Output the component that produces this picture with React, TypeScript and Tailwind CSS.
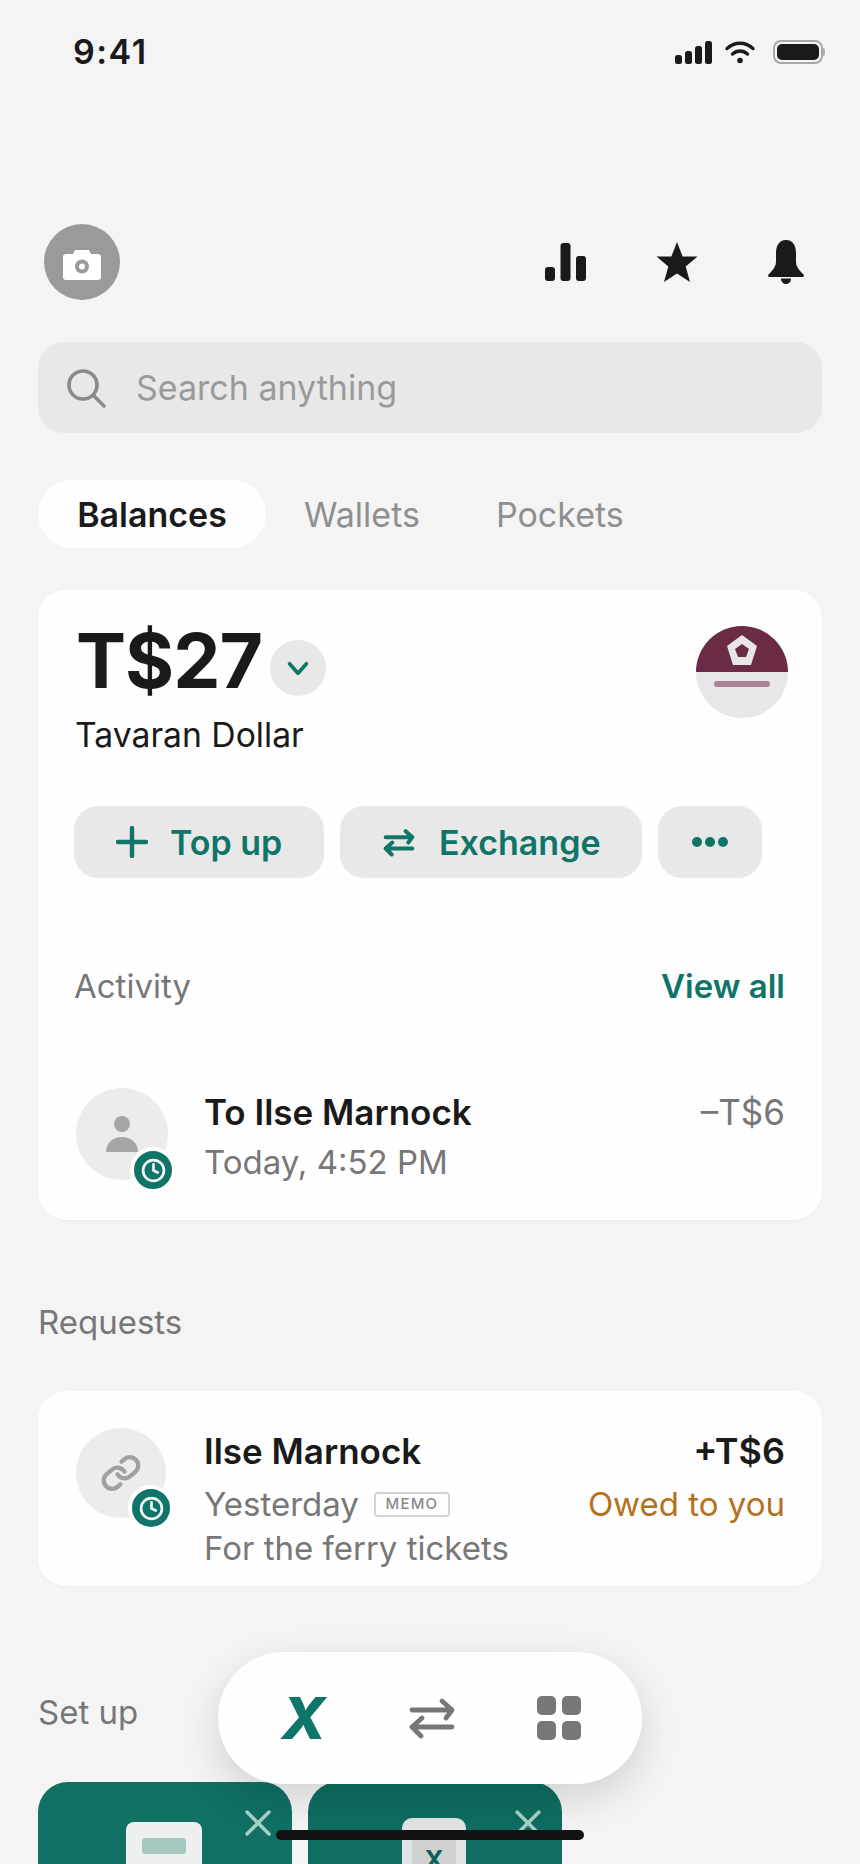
import { Clock, Link, X } from "lucide-react"

const TEAL = "#0f7568"

function ExchangeArrows({ className, strokeWidth = 2.4 }: { className?: string; strokeWidth?: number }) {
  return (
    <svg viewBox="0 0 48 40" fill="none" stroke="currentColor" strokeWidth={strokeWidth} strokeLinecap="round" strokeLinejoin="round" className={className}>
      <path d="M4 12h40M34 3l10 9-6 8" />
      <path d="M44 29H4M14 20L4 29l9 9" />
    </svg>
  )
}

function StatusBar() {
  return (
    <div className="flex h-[104px] items-start justify-between pl-[73px] pr-[35px] pt-[32px]">
      <span className="text-[34px] leading-[40px] font-semibold tracking-[1.5px] text-[#1a1a1a]">9:41</span>
      <div className="flex items-center pt-[8px]">
        <svg viewBox="0 0 38 23" className="h-[23px] w-[38px]" fill="#1a1a1a">
          <rect x="0" y="14" width="7" height="9" rx="2.5" />
          <rect x="10" y="10" width="7" height="13" rx="2.5" />
          <rect x="20" y="5" width="7" height="18" rx="2.5" />
          <rect x="30" y="0" width="7" height="23" rx="2.5" />
        </svg>
        <svg viewBox="0 0 30 24" className="ml-[11px] h-[24px] w-[32px]" fill="none" stroke="#1a1a1a" strokeWidth="3.4" strokeLinecap="round">
          <path d="M2 8.500c7.500-7 18.500-7 26 0" />
          <path d="M7.500 14c4.500-4 10.500-4 15 0" />
          <circle cx="15" cy="20.500" r="2.800" fill="#1a1a1a" stroke="none" />
        </svg>
        <div className="ml-[17px] flex items-center">
          <div className="flex h-[24px] w-[50px] items-center justify-center rounded-[8px] border-2 border-[#a8a8a8]">
            <div className="h-[16px] w-[42px] rounded-[5px] bg-[#1a1a1a]" />
          </div>
          <div className="h-[8px] w-[2px] rounded-r-full bg-[#b0b0b0]" />
        </div>
      </div>
    </div>
  )
}

function TopActions() {
  return (
    <div className="mt-[120px] flex h-[76px] items-center justify-between pl-[44px] pr-[55px]">
      <div className="flex h-[76px] w-[76px] items-center justify-center rounded-full bg-[#9a9a9a] pt-[5px]">
        <svg viewBox="0 0 38 30" className="h-[30px] w-[38px]">
          <path d="M3 4h7l2-4h14l2 4h7a3 3 0 0 1 3 3v20a3 3 0 0 1-3 3H3a3 3 0 0 1-3-3V7a3 3 0 0 1 3-3z" fill="#fff" />
          <circle cx="19" cy="16.500" r="7" fill="#9a9a9a" />
          <circle cx="19" cy="16.500" r="3" fill="#fff" />
        </svg>
      </div>
      <div className="flex items-center">
        <svg viewBox="0 0 41 38" className="h-[38px] w-[41px]" fill="#1a1a1a">
          <rect x="0" y="24" width="10" height="14" rx="3" />
          <rect x="15.500" y="0" width="10" height="38" rx="3" />
          <rect x="31" y="13" width="10" height="25" rx="3" />
        </svg>
        <svg viewBox="0 0 42 40" className="ml-[70px] h-[40px] w-[42px]" fill="#1a1a1a">
          <path d="M21 0l5.600 14.500H41.500L29.700 24.500 34 40 21 31.500 8 40l4.300-15.500L.5 14.500h14.900z" />
        </svg>
        <svg viewBox="0 0 38 44" className="ml-[69px] h-[44px] w-[38px]" fill="#1a1a1a">
          <path d="M19 0c7 0 10 6 10 13v8c0 5 2 8 7 13 1.500 1.500 1 3-1 3H3c-2 0-2.500-1.500-1-3 5-5 7-8 7-13v-8C9 6 12 0 19 0z" />
          <path d="M14 38.500h10c0 3-2 5.500-5 5.500s-5-2.500-5-5.500z" />
        </svg>
      </div>
    </div>
  )
}

function StatusBadge() {
  return (
    <div className="absolute bottom-[-13px] right-[-8px] flex h-[46px] w-[46px] items-center justify-center rounded-full border-[4px] border-[#fefefe] bg-[#0f7568]">
      <Clock className="h-[25px] w-[25px] text-[#f2f7f6]" strokeWidth={2.6} />
    </div>
  )
}

function BalanceCard() {
  return (
    <section className="mt-[42px] h-[630px] rounded-[28px] bg-[#fefefe] pl-[38px] pr-[37px] shadow-[0_1px_2px_rgba(0,0,0,0.03)]">
      <div className="flex items-start justify-between pt-[36px]">
        <div className="-mt-[5px]">
          <div className="flex items-center">
            <span className="text-[75px] leading-[80px] font-bold tracking-[-1px] text-[#1a1a1a]">T$27</span>
            <span className="ml-[8px] mt-[14px] flex h-[56px] w-[56px] items-center justify-center rounded-full bg-[#e8e8e8]">
              <svg viewBox="0 0 24 16" className="h-[15px] w-[24px]" fill="none" stroke={TEAL} strokeWidth="4" strokeLinecap="round" strokeLinejoin="round">
                <path d="M3 3l9 10 9-10" />
              </svg>
            </span>
          </div>
          <div className="-ml-[1px] mt-[12px] text-[33.700px] leading-[44px] text-[#1a1a1a]">Tavaran Dollar</div>
        </div>
        <div className="-mr-[3px] h-[92px] w-[92px] overflow-hidden rounded-full bg-[#e8e6e8]">
          <div className="flex h-[46px] items-center justify-center bg-[#6b2a45]">
            <svg viewBox="0 0 30 30" className="mt-[2px] h-[30px] w-[30px]">
              <path d="M15 0l15 11-6 19H6L0 11z" fill="#e8e6e8" />
              <path d="M15 9l7 5-3 8h-8l-3-8z" fill="#6b2a45" />
            </svg>
          </div>
          <div className="mx-auto mt-[9px] h-[6px] w-[56px] rounded-full bg-[#ab8296]" />
        </div>
      </div>
      <div className="-ml-[2px] mt-[49px] flex gap-[16px] text-[34px] font-semibold text-[#0f7568]">
        <button className="flex h-[72px] w-[250px] items-center rounded-[24px] bg-[#e8e8e8] pl-[42px]">
          <svg viewBox="0 0 32 32" className="h-[32px] w-[32px]" fill="none" stroke={TEAL} strokeWidth="4.4" strokeLinecap="round">
            <path d="M16 2v28M2 16h28" />
          </svg>
          <span className="ml-[22px]">Top up</span>
        </button>
        <button className="flex h-[72px] w-[302px] items-center rounded-[24px] bg-[#e8e8e8] pl-[43px]">
          <ExchangeArrows className="h-[29px] w-[32px]" strokeWidth={6} />
          <span className="ml-[24px]">Exchange</span>
        </button>
        <button className="flex h-[72px] w-[104px] items-center justify-center gap-[3px] rounded-[24px] bg-[#e8e8e8]">
          <span className="h-[10px] w-[10px] rounded-full bg-[#0f7568]" />
          <span className="h-[10px] w-[10px] rounded-full bg-[#0f7568]" />
          <span className="h-[10px] w-[10px] rounded-full bg-[#0f7568]" />
        </button>
      </div>
      <div className="mt-[88px] flex items-center justify-between leading-[40px]">
        <span className="-ml-[2px] text-[33px] text-[#777777]">Activity</span>
        <span className="text-[33px] font-semibold text-[#0f7568]">View all</span>
      </div>
      <div className="mt-[82px] flex items-start">
        <div className="relative flex h-[92px] w-[92px] shrink-0 items-center justify-center rounded-full bg-[#ececec]">
          <svg viewBox="0 0 32 36" className="h-[36px] w-[32px]" fill="#a6a6a6">
            <circle cx="16" cy="8" r="8" />
            <path d="M0 36c0-9 7-15 16-15s16 6 16 15z" />
          </svg>
          <StatusBadge />
        </div>
        <div className="ml-[36px] flex-1">
          <div className="flex items-center justify-between">
            <span className="text-[35px] leading-[48px] font-semibold text-[#1a1a1a]">To Ilse Marnock</span>
            <span className="text-[35px] leading-[48px] text-[#777777]">–T$6</span>
          </div>
          <div className="mt-[3px] text-[33px] leading-[46px] text-[#777777]">Today, 4:52 PM</div>
        </div>
      </div>
    </section>
  )
}

function RequestsCard() {
  return (
    <section className="mt-[49px] flex h-[195px] items-start rounded-[28px] bg-[#fefefe] pl-[38px] pr-[37px] pt-[36px] shadow-[0_1px_2px_rgba(0,0,0,0.03)]">
      <div className="relative mt-[1px] flex h-[90px] w-[90px] shrink-0 items-center justify-center rounded-full bg-[#ececec]">
        <Link className="h-[40px] w-[40px] rotate-[5deg] text-[#a0a0a0]" strokeWidth={2.6} />
        <StatusBadge />
      </div>
      <div className="ml-[38px] flex-1">
        <div className="flex items-center justify-between leading-[48px]">
          <span className="text-[35px] font-semibold text-[#1a1a1a]">Ilse Marnock</span>
          <span className="text-[36px] font-semibold text-[#1a1a1a]">+T$6</span>
        </div>
        <div className="mt-[7px] flex items-center justify-between leading-[44px]">
          <div className="flex items-center">
            <span className="text-[33px] text-[#777777]">Yesterday</span>
            <span className="ml-[15px] flex h-[25px] w-[76px] items-center justify-center rounded-[4px] border-2 border-[#d4d4d4] text-[15px] font-medium tracking-[1.2px] text-[#8a8a8a]">MEMO</span>
          </div>
          <span className="text-[33px] text-[#b5701c]">Owed to you</span>
        </div>
        <div className="text-[33px] leading-[44px] text-[#777777]">For the ferry tickets</div>
      </div>
    </section>
  )
}

function SetupCards() {
  return (
    <div className="mt-[50px] flex gap-[16px]">
      <div className="relative h-[120px] w-[254px] rounded-t-[30px] bg-[#0f7063]">
        <div className="absolute left-[88px] top-[40px] h-[80px] w-[76px] rounded-t-[8px] bg-[#eef0f0] pl-[16px] pt-[16px]">
          <div className="h-[16px] w-[44px] rounded-[3px] bg-[#a5c9c1]" />
        </div>
        <X className="absolute right-[12px] top-[19px] h-[44px] w-[44px] text-[#a8d0c9]" strokeWidth={1.9} />
      </div>
      <div className="relative h-[120px] w-[254px] rounded-t-[30px] bg-[#0f6d61]">
        <div className="absolute left-[94px] top-[36px] h-[84px] w-[64px] rounded-t-[10px] bg-[#e2e4e4]">
          <div className="mx-auto mt-[12px] h-[72px] w-[44px] bg-[#cfd2d1] pt-[14px] text-center text-[26px] leading-[32px] font-bold text-[#0f6459]">X</div>
        </div>
        <X className="absolute right-[12px] top-[19px] h-[44px] w-[44px] text-[#a8d0c9]" strokeWidth={1.9} />
      </div>
    </div>
  )
}

function FloatingNav() {
  return (
    <nav className="absolute left-[218px] top-[1652px] flex h-[132px] w-[424px] items-center rounded-[66px] bg-[#fefefe] pl-[63px] shadow-[0_14px_40px_rgba(0,0,0,0.14)]">
      <span className="w-[45px] text-center text-[58px] leading-none font-extrabold italic text-[#0f7568]">X</span>
      <ExchangeArrows className="ml-[82px] h-[42px] w-[48px] text-[#777777]" strokeWidth={4.8} />
      <div className="ml-[81px] grid grid-cols-2 gap-[6px]">
        <span className="h-[19px] w-[19px] rounded-[5px] bg-[#777777]" />
        <span className="h-[19px] w-[19px] rounded-[5px] bg-[#777777]" />
        <span className="h-[19px] w-[19px] rounded-[5px] bg-[#777777]" />
        <span className="h-[19px] w-[19px] rounded-[5px] bg-[#777777]" />
      </div>
    </nav>
  )
}

export default function App() {
  return (
    <div className="relative h-[1864px] w-[860px] overflow-hidden bg-[#f4f4f4] font-['Inter',sans-serif]">
      <StatusBar />
      <TopActions />
      <main className="px-[38px]">
        <div className="mt-[42px] flex h-[91px] items-center rounded-[26px] bg-[#e8e8e8] pl-[28px]">
          <svg viewBox="0 0 40 40" className="h-[40px] w-[40px]" fill="none" stroke="#8a8a8a" strokeWidth="3.6" strokeLinecap="round">
            <circle cx="17" cy="17" r="14" />
            <path d="M27.500 27.500L38 38" />
          </svg>
          <span className="ml-[30px] text-[34px] text-[#9a9a9a]">Search anything</span>
        </div>
        <div className="mt-[47px] flex items-center">
          <span className="flex h-[68px] w-[228px] items-center justify-center rounded-[34px] bg-[#fefefe] text-[34px] font-semibold text-[#1a1a1a]">Balances</span>
          <span className="ml-[38px] text-[34px] text-[#8f8f8f]">Wallets</span>
          <span className="ml-[76px] text-[34px] text-[#8f8f8f]">Pockets</span>
        </div>
        <BalanceCard />
        <div className="mt-[82px] text-[33px] leading-[40px] text-[#777777]">Requests</div>
        <RequestsCard />
        <div className="mt-[106px] text-[33px] leading-[40px] text-[#777777]">Set up</div>
        <SetupCards />
      </main>
      <FloatingNav />
      <div className="absolute left-[276px] top-[1830px] h-[10px] w-[308px] rounded-full bg-[#121214]" />
    </div>
  )
}
